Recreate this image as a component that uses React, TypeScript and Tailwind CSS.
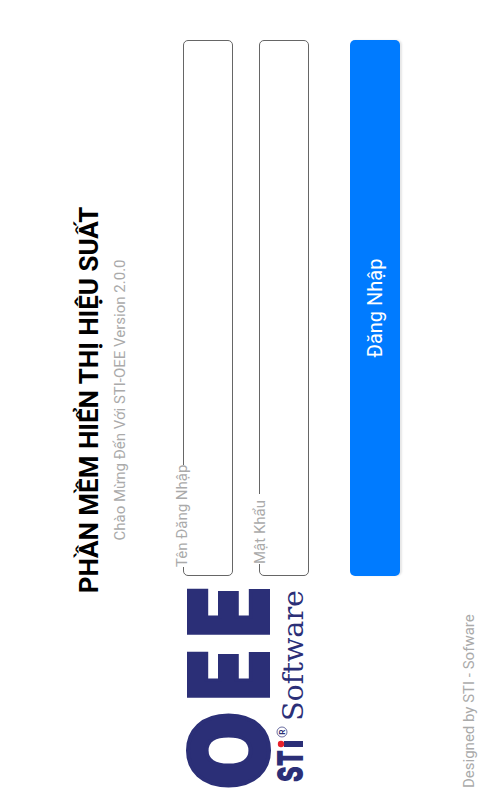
function Logo() {
  const navy = "#2b2f77";
  return (
    <svg width="200" height="118" viewBox="0 0 200 118" className="block overflow-visible">
      {/* OEE */}
      <g fill={navy} stroke={navy} strokeWidth="4" fontFamily="Inter, sans-serif" fontWeight="900" fontSize="108">
        <text x="-1" y="81" textLength="77" lengthAdjust="spacingAndGlyphs">O</text>
        <text x="88" y="81" textLength="50" lengthAdjust="spacingAndGlyphs">E</text>
        <text x="151" y="81" textLength="50" lengthAdjust="spacingAndGlyphs">E</text>
      </g>
      {/* STi */}
      <text x="6" y="116" fill={navy} fontFamily="Inter, sans-serif" fontWeight="900" fontSize="36" textLength="32" lengthAdjust="spacingAndGlyphs">ST</text>
      <rect x="41" y="97" width="6" height="19" fill={navy} />
      <circle cx="44" cy="94" r="3.2" fill="#e8202a" />
      <circle cx="56" cy="95" r="5" fill="none" stroke={navy} strokeWidth="0.7" />
      <text x="56" y="98" fill={navy} textAnchor="middle" fontFamily="Inter, sans-serif" fontWeight="700" fontSize="8">R</text>
      {/* Software */}
      <text x="67" y="116" fill={navy} fontFamily="'DejaVu Serif', serif" fontSize="28" textLength="131" lengthAdjust="spacingAndGlyphs">Software</text>
    </svg>
  );
}

function Field({ label, labelClass }: { label: string; labelClass: string }) {
  return (
    <div className="relative h-[50px] rounded-[5px] border border-[#666666]">
      <span className={"absolute bg-white text-[15px] leading-[20px] text-[#aaaaaa] " + labelClass}>{label}</span>
    </div>
  );
}

export default function App() {
  return (
    <div className="relative h-[800px] w-[480px] overflow-hidden bg-white font-['Roboto',sans-serif]">
      {/* màn hình xoay ngang */}
      <div className="flex h-[480px] w-[800px] origin-top-left translate-y-[800px] -rotate-90 flex-col">
        <div className="flex flex-col items-center pt-[74px]">
          <h1 className="text-[26px] leading-[30px] font-bold text-black">PHẦN MỀM HIỂN THỊ HIỆU SUẤT</h1>
          <p className="mt-[6px] text-[15px] leading-[20px] text-[#aaaaaa]">Chào Mừng Đến Với STI-OEE Version 2.0.0</p>
        </div>
        <div className="flex flex-1">
          <div className="flex w-[224px] flex-col pt-[57px] pb-[1px] pl-[12px]">
            <Logo />
            <p className="mt-auto text-[15px] leading-[20px] text-[#aaaaaa]">Designed by STI - Sofware</p>
          </div>
          <div className="flex w-[536px] flex-col gap-[26px] pt-[53px]">
            <Field label="Tên Đăng Nhập" labelClass="left-[8px] top-[-12px]" />
            <Field label="Mật Khẩu" labelClass="left-[11px] top-[-10px] pr-[6px]" />
            <button className="mt-[15px] h-[50px] rounded-[5px] bg-[#007bff] text-[20px] text-white shadow-[0_2px_2px_rgba(0,0,0,0.1)]">Đăng Nhập</button>
          </div>
        </div>
      </div>
    </div>
  );
}
